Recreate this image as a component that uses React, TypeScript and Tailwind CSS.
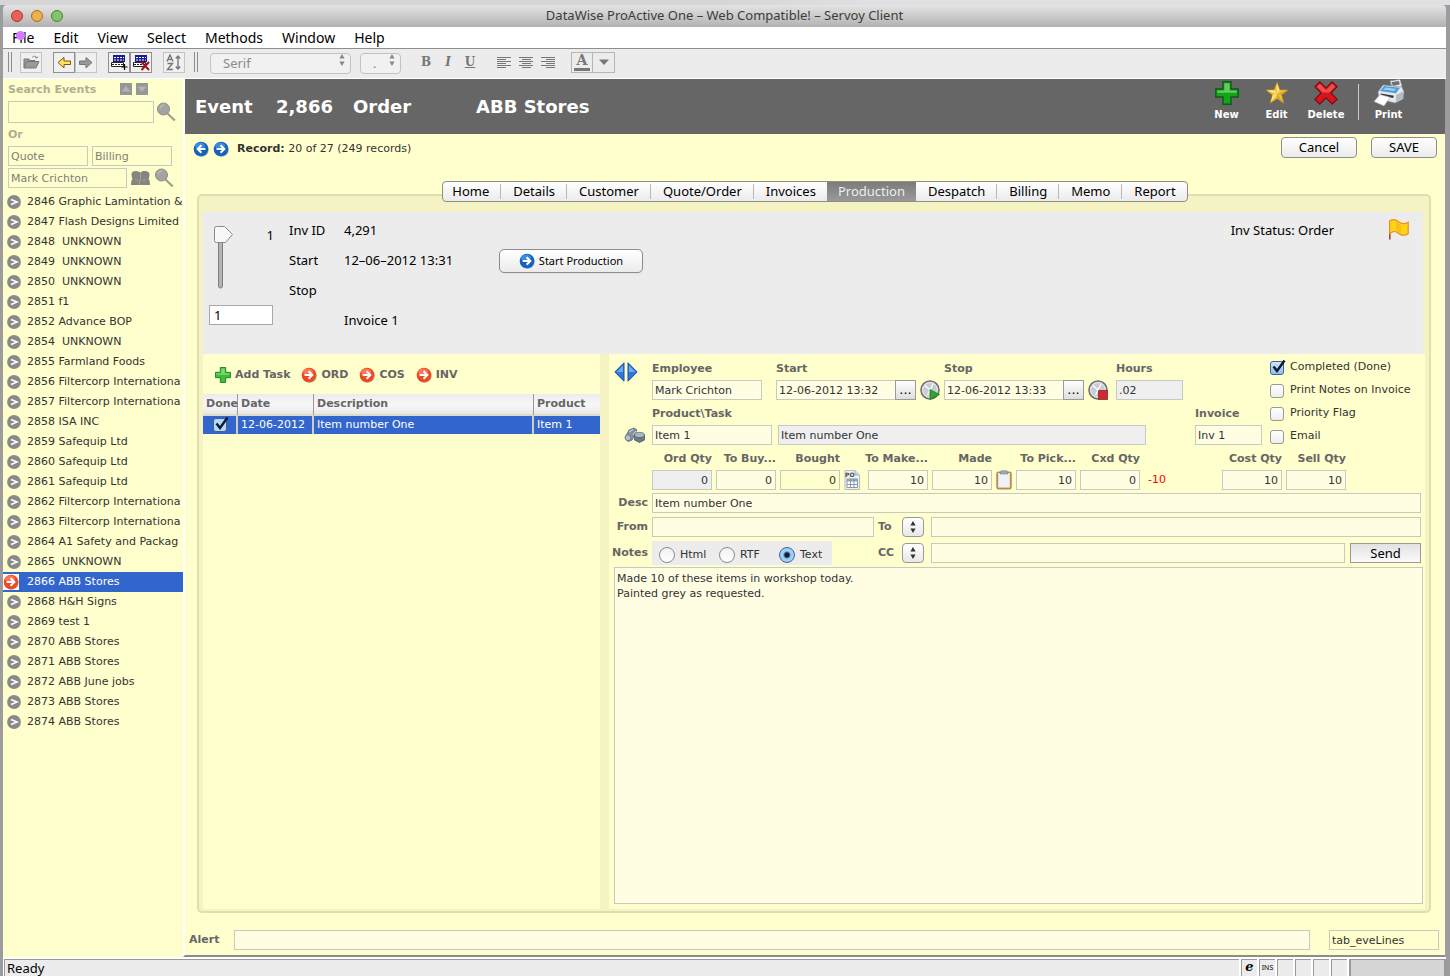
import { useState, type ReactNode } from "react";
import clsx from "clsx";

const UI = "font-['Noto_Sans','Lucida_Grande',sans-serif]";
const VERDANA = "font-['DejaVu_Sans',Verdana,sans-serif]";

const MENU = ["File", "Edit", "View", "Select", "Methods", "Window", "Help"];

const TABS = [
  "Home",
  "Details",
  "Customer",
  "Quote/Order",
  "Invoices",
  "Production",
  "Despatch",
  "Billing",
  "Memo",
  "Report",
];

const EVENTS = [
  { id: 2846, name: "Graphic Lamintation &" },
  { id: 2847, name: "Flash Designs Limited" },
  { id: 2848, name: " UNKNOWN" },
  { id: 2849, name: " UNKNOWN" },
  { id: 2850, name: " UNKNOWN" },
  { id: 2851, name: "f1" },
  { id: 2852, name: "Advance BOP" },
  { id: 2854, name: " UNKNOWN" },
  { id: 2855, name: "Farmland Foods" },
  { id: 2856, name: "Filtercorp Internationa" },
  { id: 2857, name: "Filtercorp Internationa" },
  { id: 2858, name: "ISA INC" },
  { id: 2859, name: "Safequip Ltd" },
  { id: 2860, name: "Safequip Ltd" },
  { id: 2861, name: "Safequip Ltd" },
  { id: 2862, name: "Filtercorp Internationa" },
  { id: 2863, name: "Filtercorp Internationa" },
  { id: 2864, name: "A1 Safety and Packag" },
  { id: 2865, name: " UNKNOWN" },
  { id: 2866, name: "ABB Stores" },
  { id: 2868, name: "H&H Signs" },
  { id: 2869, name: "test 1" },
  { id: 2870, name: "ABB Stores" },
  { id: 2871, name: "ABB Stores" },
  { id: 2872, name: "ABB June jobs" },
  { id: 2873, name: "ABB Stores" },
  { id: 2874, name: "ABB Stores" },
];

/* ---------- icons ---------- */

function ArrowBall({ tone, flip }: { tone: "blue" | "red"; flip?: boolean }) {
  const fill = tone === "blue" ? "#1263c0" : "#ee4a22";
  const shine = tone === "blue" ? "#5aa9ee" : "#ff9a78";
  return (
    <svg width="16" height="16" viewBox="0 0 16 16" className="shrink-0" aria-hidden>
      <circle cx="8.5" cy="8.7" r="7.3" fill="#00000040" />
      <circle cx="8" cy="8" r="7.3" fill={fill} />
      <ellipse cx="7" cy="4.8" rx="5" ry="3.4" fill={shine} opacity="0.6" />
      <g transform={flip ? "matrix(-1 0 0 1 16 0)" : undefined} stroke="#fff" strokeWidth="2" fill="none">
        <path d="M3.6 8h7.6M7.6 4.2 11.4 8l-3.800 3.800" />
      </g>
    </svg>
  );
}

function GreyBall() {
  return (
    <svg width="14" height="14" viewBox="0 0 14 14" className="shrink-0" aria-hidden>
      <circle cx="7" cy="7" r="6.9" fill="#8a8a8a" />
      <path d="M4 4.4 10 7 4 9.6" stroke="#fff" strokeWidth="1.6" fill="none" />
    </svg>
  );
}

function Magnifier() {
  return (
    <svg width="20" height="20" viewBox="0 0 20 20" className="shrink-0" aria-hidden>
      <path d="m11.5 11.5 7.3 7" stroke="#a09f8c" strokeWidth="2.2" />
      <circle cx="7.5" cy="7" r="6" fill="#a3a3a3" stroke="#8d8d84" />
      <path d="M4 6.5A3.8 3.8 0 0 1 8 3.3" stroke="#b9b9b9" strokeWidth="1.4" fill="none" />
    </svg>
  );
}

function PlusIcon({ size, dark }: { size: number; dark?: boolean }) {
  return (
    <svg width={size} height={size} viewBox="0 0 24 24" aria-hidden>
      <path
        d="M8 .8h8V8h7.2v8H16v7.2H8V16H.8V8H8z"
        fill={dark ? "#12a51b" : "#3cc03a"}
        stroke={dark ? "#0b5c12" : "#1d7d22"}
        strokeWidth="1.4"
      />
      <path d="M9.300 2.200h5.400v7.200h7v2.400H2.300V9.400h7z" fill="#b9f0a8" opacity="0.5" />
    </svg>
  );
}

function StarIcon() {
  return (
    <svg width="24" height="24" viewBox="0 0 24 24" aria-hidden>
      <path
        d="m12 .8 2.900 7.900 8.400.3-6.600 5.100 2.300 8.300-7-4.700-7 4.700 2.300-8.300L.7 9l8.400-.3z"
        fill="#f0c33c"
        stroke="#a77c1c"
        strokeWidth="0.6"
      />
      <path d="m12 2 2.400 7.200L12 13zM1.800 9.300 9.400 9.200 12 13zM5.600 21.300l2.100-7L12 13z" fill="#fff0a8" opacity="0.75" />
      <path d="m22.300 9.400-5.900 4.600L12 13zM18.300 21.400 12 17.200V13z" fill="#c98d1e" opacity="0.6" />
    </svg>
  );
}

function CrossIcon() {
  return (
    <svg width="24" height="24" viewBox="0 0 24 24" aria-hidden>
      <path
        d="M5.800.9 12 7 18.200.9l4.900 4.900L16.900 12l6.200 6.200-4.900 4.900L12 16.900l-6.200 6.200-4.900-4.900L7.100 12 .9 5.800z"
        fill="#d5151b"
        stroke="#7c0b10"
        strokeWidth="1.2"
      />
      <path d="M5.800 2.700 12 9l6.200-6.300 3 3.100-5.700 5.700H8.500L2.800 5.800z" fill="#ff9a90" opacity="0.45" />
    </svg>
  );
}

function PrinterIcon() {
  return (
    <svg width="32" height="28" viewBox="0 0 32 28" aria-hidden>
      <path d="m17 2 10-1.500 2 7-9 3z" fill="#f4f4f4" stroke="#999" strokeWidth="0.6" />
      <path d="m18.500 3 7.500-1 .8 3.500-7 1.500z" fill="#6d7074" />
      <path d="M5 13 10 6l19 2 2 5-1 7-8 4-16-4z" fill="#e4e9ee" stroke="#8b949c" strokeWidth="0.7" />
      <path d="m7 12 4-5 16 1.800-4 5.500z" fill="#4f9cd8" />
      <path d="m10 10.500 3-2 10 1.500-2 2z" fill="#9dd0f2" />
      <path d="m23 16 7-3.500v6.500l-7 4z" fill="#b4bbc2" />
      <path d="m8 14.500 13 2.300-1 2.200-13-3z" fill="#33383d" />
      <path d="m7 15.500 10 2.800-6 8.700L1 22.500z" fill="#fff" stroke="#a0a8b0" strokeWidth="0.6" />
    </svg>
  );
}

function FlagIcon() {
  return (
    <svg width="21" height="21" viewBox="0 0 21 21" aria-hidden>
      <path d="M1.800 2v18.500" stroke="#9a4a2c" strokeWidth="1.6" />
      <path
        d="M1.600 2C5-.2 8 .6 10.500 2.600S16.500 5.600 20.200 3.200v11.500c-3.500 2.300-6.500 2-9.500-.3S5.500 11.500 1.600 14.500z"
        fill="#fdd31c"
        stroke="#ef8b1c"
        strokeWidth="1.2"
      />
      <path d="M8 2.500c3 1 3 2.500 5 3.500v9c-2-1-3-2.500-5-3z" fill="#fbb012" opacity="0.6" />
    </svg>
  );
}

function ClockIcon({ mode }: { mode: "play" | "stop" }) {
  return (
    <svg width="20" height="20" viewBox="0 0 20 20" className="shrink-0" aria-hidden>
      <circle cx="10" cy="10" r="9" fill="#dfe4e8" stroke="#707070" strokeWidth="1.6" />
      <circle cx="10" cy="10" r="6.8" fill="#c5ccd3" />
      <path d="M10 10 5 5.500M10 10l3-6M10 10l-2.500 5" stroke="#fff" strokeWidth="1.3" />
      {mode === "play" ? (
        <path d="m10 9.500 9.500 5L10 19.500z" fill="#2fa52f" stroke="#1c6e1f" strokeWidth="0.7" />
      ) : (
        <path d="M10.500 10.500h9v9h-9z" fill="#cf2b30" stroke="#8a1418" strokeWidth="0.7" />
      )}
    </svg>
  );
}

function BinocularsIcon() {
  return (
    <svg width="21" height="16" viewBox="0 0 21 16" aria-hidden>
      <path d="M1 10.500 5 3l5-2 3 2-5 10-4 1.500z" fill="#8593a0" stroke="#55616c" strokeWidth="0.8" />
      <ellipse cx="4" cy="10.800" rx="2.800" ry="3" fill="#b4c0ca" stroke="#5d6974" strokeWidth="0.7" />
      <path d="M10.500 8v5l5 2.500 5-2.500V8z" fill="#6d7b88" stroke="#4c5863" strokeWidth="0.8" />
      <ellipse cx="15.500" cy="8" rx="5" ry="2.600" fill="#a9b7c3" stroke="#4e5a65" strokeWidth="0.7" />
      <path d="m5 5 4-2.500M9 8l3-4" stroke="#d5dde4" />
    </svg>
  );
}

function PurchaseOrderIcon() {
  return (
    <svg width="16" height="20" viewBox="0 0 16 20" aria-hidden>
      <path d="M1 .5h10l4.500 4.500v14.500H1z" fill="#eef1f4" stroke="#b5bcc4" />
      <path d="M11 .5V5h4.500" fill="#cfd6dd" stroke="#a7b0b9" />
      <text x="1" y="7" fontSize="6" fontWeight="700" fontFamily="DejaVu Sans" fill="#444">
        PO
      </text>
      <path d="M3 9h10.500v8.500H3z" fill="#fff" stroke="#8799ab" />
      <path d="M3 9h10.500v2.500H3z" fill="#8fa3b6" />
      <path d="M3 14.500h10.500M6.500 9v8.500M10 9v8.500" stroke="#8799ab" />
    </svg>
  );
}

function ClipboardIcon() {
  return (
    <svg width="16" height="20" viewBox="0 0 16 20" aria-hidden>
      <rect x="0.8" y="2" width="14.400" height="17" rx="1.5" fill="#c99a5c" stroke="#9b7442" strokeWidth="0.8" />
      <path d="M2.200 3h11.600v14.500H2.200z" fill="#eff2f6" />
      <path d="M5 .8h6l1 3.200H4z" fill="#a4a9ae" stroke="#7d8287" strokeWidth="0.6" />
    </svg>
  );
}

function RecordTriangles() {
  return (
    <svg width="24" height="20" viewBox="0 0 24 20" aria-hidden>
      <path d="M10 .8v18.400L.8 10z" fill="#2f78d8" stroke="#1d4f9f" />
      <path d="M14 .8v18.400L23.200 10z" fill="#2f78d8" stroke="#1d4f9f" />
      <path d="M9 3.500V10H2.800zM15 3.500V10h6.200z" fill="#8fc0f7" opacity="0.7" />
    </svg>
  );
}

function UpDown({ className }: { className?: string }) {
  return (
    <svg width="6" height="12" viewBox="0 0 6 12" className={className} fill="currentColor" aria-hidden>
      <path d="M3 0 5.600 4.400H.4zM3 12 .4 7.600h5.200z" />
    </svg>
  );
}

function PeopleIcon() {
  return (
    <svg width="19" height="16" viewBox="0 0 19 16" aria-hidden>
      <path
        d="M.5 4c0-2 2-3 4.500-3s4 1 4.500 2C10.500 1 12 1 14 1s4.500 1 4.500 3.500-.5 3.500-1 4.500c1 1 1.500 2.500 1.500 6H0c0-3 .5-5 1.500-6C1 8 .5 6 .5 4z"
        fill="#858580"
      />
      <path d="M9.500 4v5l-1.500 6M4 9l3 2M15 9l-3 2" stroke="#a5a59c" fill="none" />
    </svg>
  );
}

function Tick() {
  return (
    <svg width="16" height="16" viewBox="0 0 16 16" className="pointer-events-none absolute -top-0.5 left-0" aria-hidden>
      <path d="M3.500 7.500 7 12 14.500 1.500" stroke="#0b1a30" strokeWidth="2.4" fill="none" />
    </svg>
  );
}

/* ---------- toolbar ---------- */

function ToolButton({ label, dim, children }: { label: string; dim?: boolean; children: ReactNode }) {
  return (
    <button
      type="button"
      aria-label={label}
      className={clsx(
        "flex h-[21px] w-[22px] items-center justify-center border bg-[#f0f0f0]",
        dim ? "border-[#c4c4c4]" : "border-[#8f8f8f]",
      )}
    >
      <svg width="18" height="17" viewBox="0 0 18 17" aria-hidden>
        {children}
      </svg>
    </button>
  );
}

function Grip() {
  return <span className="h-5 w-1 border-x border-[#8c8c8c]" />;
}

function TableGlyph({ children }: { children: ReactNode }) {
  return (
    <>
      <path d="M3 1h12v7H3z" fill="#1b1b8c" />
      <path d="M4 3.500h10M4 6h10" stroke="#fff" strokeDasharray="2 1" />
      <path d="M1.500 8.500h12v4h-12z" fill="#fff" stroke="#222" />
      <path d="M2 10.500h11" stroke="#222" strokeDasharray="2 1" />
      {children}
    </>
  );
}

function AlignGlyph({ lines }: { lines: string }) {
  return (
    <svg width="15" height="13" viewBox="0 0 15 13" aria-hidden>
      <path d={lines} stroke="#777" />
    </svg>
  );
}

function Toolbar() {
  const select =
    "h-[21px] appearance-none rounded border border-[#c2c2c2] bg-[#f1f1f1] pl-3 text-[13px] leading-[17px] text-[#8a8a8a]";
  return (
    <div className="flex h-[30px] items-center border-b border-white bg-[#ececec] pb-[3px] pl-[5px] text-[#888]">
      <Grip />
      <div className="ml-2 flex">
        <ToolButton label="Open" dim>
          <path d="M2 14V5h5l1 1.500h5V8" fill="#999" stroke="#777" />
          <path d="m2 14 3-6.500h12L14 14z" fill="#999" stroke="#777" />
          <path d="M10 3.500c2-2 4-1.500 5 .5l1-1.500M15 4l-2-.5" stroke="#888" fill="none" />
        </ToolButton>
      </div>
      <div className="ml-[11px] flex">
        <ToolButton label="Back">
          <path d="m3 8.500 6-5V7h6.500v3.500H9V14z" fill="#ffe15a" stroke="#7a5a10" />
        </ToolButton>
        <ToolButton label="Forward" dim>
          <path d="m15 8.500-6-5V7H2.500v3.500H9V14z" fill="#999" stroke="#777" />
        </ToolButton>
      </div>
      <div className="ml-[11px] flex">
        <ToolButton label="New record">
          <TableGlyph>
            <path d="M14.500 10v6M11.500 13h6" stroke="#000" strokeWidth="1.2" />
          </TableGlyph>
        </ToolButton>
        <ToolButton label="Delete record">
          <TableGlyph>
            <path d="m9.500 8 7.500 8M17 8l-7.500 8" stroke="#a3121f" strokeWidth="2" />
          </TableGlyph>
        </ToolButton>
      </div>
      <div className="ml-[11px] mr-[9px] flex">
        <ToolButton label="Sort" dim>
          <path d="M2 7.500 5 1l3 6.500M3 5.500h4M2.500 9.500h5L2.500 15.500h5.500" stroke="#777" strokeWidth="1.4" fill="none" />
          <path d="M13 2v13M10.800 4.500 13 2l2.200 2.500M10.800 12.500 13 15l2.200-2.500" stroke="#777" strokeWidth="1.4" fill="none" />
        </ToolButton>
      </div>
      <Grip />
      <div className="relative ml-3">
        <select aria-label="Font" className={clsx(select, "w-[141px]")}>
          <option>Serif</option>
        </select>
        <UpDown className="pointer-events-none absolute right-1.5 top-1" />
      </div>
      <div className="relative ml-[9px]">
        <select aria-label="Font size" className={clsx(select, "w-[41px]")}>
          <option>.</option>
        </select>
        <UpDown className="pointer-events-none absolute right-1.5 top-1" />
      </div>
      <div className="ml-3.5 flex font-['DejaVu_Serif',serif] text-[12px] font-bold text-[#777]">
        <button type="button" className="w-[22px]">B</button>
        <button type="button" className="w-[22px] italic">I</button>
        <button type="button" className="w-[22px] underline">U</button>
      </div>
      <div className="ml-4 flex gap-[7px]">
        <button type="button" aria-label="Align left">
          <AlignGlyph lines="M0 1.500h14M0 3.500h9M0 5.500h14M0 7.500h9M0 9.500h14M0 11.500h9" />
        </button>
        <button type="button" aria-label="Align center">
          <AlignGlyph lines="M0 1.500h14M3 3.500h9M0 5.500h14M3 7.500h9M0 9.500h14M3 11.500h9" />
        </button>
        <button type="button" aria-label="Align right">
          <AlignGlyph lines="M0 1.500h14M5 3.500h9M0 5.500h14M5 7.500h9M0 9.500h14M5 11.500h9" />
        </button>
      </div>
      <div className="ml-[15px] flex">
        <button
          type="button"
          className="flex h-[21px] w-[22px] flex-col items-center border border-[#b5b5b5] font-['DejaVu_Serif',serif] text-[14px] font-bold leading-[15px] text-[#777]"
        >
          A
          <span className="h-[3px] w-4 bg-[#777]" />
        </button>
        <button
          type="button"
          aria-label="Text colour"
          className="flex h-[21px] w-[22px] items-center justify-center border border-l-0 border-[#b5b5b5]"
        >
          <svg width="10" height="6" viewBox="0 0 10 6" aria-hidden>
            <path d="M0 .5h10L5 6z" fill="#777" />
          </svg>
        </button>
      </div>
    </div>
  );
}

/* ---------- form pieces ---------- */

const INPUT = "h-5 border border-[#c9c9c4] px-[2px] text-[11px] text-[#333] outline-none";

type FieldProps = {
  id: string;
  label: string;
  value: string;
  className: string;
  grey?: boolean;
  picker?: boolean;
};

function Field({ id, label, value, className, grey, picker }: FieldProps) {
  return (
    <div className={clsx("flex shrink-0 flex-col gap-1", className)}>
      <label htmlFor={id} className="h-[15px] text-[11px] font-bold leading-[15px] text-[#666]">
        {label}
      </label>
      <div className="flex">
        <input
          id={id}
          defaultValue={value}
          className={clsx(INPUT, "w-full min-w-0", grey ? "bg-[#efefef]" : "bg-[#fffee3]", picker && "border-r-0")}
        />
        {picker && (
          <button
            type="button"
            aria-label={`Pick ${label}`}
            className="h-5 w-[21px] shrink-0 border border-[#9a9a9a] bg-linear-to-b from-white to-[#dedede] text-[13px] leading-[18px] text-black"
          >
            ...
          </button>
        )}
      </div>
    </div>
  );
}

function Qty({ id, label, value, bg = "bg-[#fffee3]" }: { id: string; label: string; value: string; bg?: string }) {
  return (
    <div className="flex w-[60px] shrink-0 flex-col items-end gap-1">
      <label htmlFor={id} className="h-[15px] whitespace-nowrap text-[11px] font-bold leading-[15px] text-[#666]">
        {label}
      </label>
      <input id={id} defaultValue={value} className={clsx(INPUT, "w-full pr-[3px] text-right", bg)} />
    </div>
  );
}

function Check({ id, label, checked }: { id: string; label: string; checked?: boolean }) {
  const [on, setOn] = useState(!!checked);
  return (
    <div className="flex h-[23px] items-center">
      <span className="relative h-[14px] w-[14px]">
        <input
          id={id}
          type="checkbox"
          checked={on}
          onChange={() => setOn(!on)}
          className="block h-[14px] w-[14px] appearance-none rounded-[3px] border border-[#9a9a90] bg-linear-to-b from-white to-[#eeeeee] checked:border-[#44608c] checked:from-[#cfe5fb] checked:to-[#8cc0f2]"
        />
        {on && <Tick />}
      </span>
      <label htmlFor={id} className="ml-1.5 whitespace-nowrap text-[11px] text-[#333]">
        {label}
      </label>
    </div>
  );
}

function RowLabel({ htmlFor, children }: { htmlFor: string; children: ReactNode }) {
  return (
    <label htmlFor={htmlFor} className="w-[43px] shrink-0 pr-1 text-right text-[11px] font-bold text-[#666]">
      {children}
    </label>
  );
}

function Stepper({ label }: { label: string }) {
  return (
    <button
      type="button"
      aria-label={label}
      className="flex h-5 w-[22px] shrink-0 items-center justify-center rounded border border-[#999] bg-linear-to-b from-white to-[#e8e8e8] text-[#333]"
    >
      <UpDown />
    </button>
  );
}

/* ---------- sidebar ---------- */

function Sidebar() {
  const [selected, setSelected] = useState(2866);
  const box = "h-5 border border-[#c9c9c4] bg-transparent px-0.5 text-[11px] text-[#80807a] outline-none";

  return (
    <aside className="w-[180px] shrink-0 overflow-hidden bg-[#fffecd]">
      <div className="flex h-[113px] flex-col pl-[5px]">
        <div className="flex h-[22px] items-center">
          <label htmlFor="search" className="w-28 pt-px text-[11px] font-bold text-[#b0af92]">
            Search Events
          </label>
          <div className="mb-0.5 flex gap-1">
            {["M6 3 10.500 8.500h-9z", "M6 9 1.500 3.500h9z"].map((d, i) => (
              <button key={d} type="button" aria-label={i ? "Next" : "Previous"} className="bg-[#979797]">
                <svg width="12" height="12" viewBox="0 0 12 12" aria-hidden>
                  <path d={d} fill="#b4b4b0" />
                </svg>
              </button>
            ))}
          </div>
        </div>
        <div className="flex items-center gap-0.5">
          <input id="search" className={clsx(box, "h-[22px] w-[146px]")} />
          <Magnifier />
        </div>
        <span className="flex h-[23px] items-center pt-0.5 text-[11px] font-bold text-[#b0af92]">Or</span>
        <div className="flex gap-1">
          <input aria-label="Type" defaultValue="Quote" className={clsx(box, "w-20")} />
          <input aria-label="Stage" defaultValue="Billing" className={clsx(box, "w-20")} />
        </div>
        <div className="mt-0.5 flex items-center gap-1">
          <input aria-label="Employee filter" defaultValue="Mark Crichton" className={clsx(box, "w-[119px]")} />
          <PeopleIcon />
          <Magnifier />
        </div>
      </div>
      <ul>
        {EVENTS.map((event) => {
          const active = event.id === selected;
          return (
            <li key={event.id}>
              <button
                type="button"
                onClick={() => setSelected(event.id)}
                className={clsx(
                  "flex h-5 w-full items-center text-left text-[11px]",
                  active ? "bg-[#3366cc] text-white" : "text-[#333]",
                )}
              >
                <span className="flex w-6 shrink-0 pl-1">
                  {active ? (
                    <span className="-ml-1 bg-white">
                      <ArrowBall tone="red" />
                    </span>
                  ) : (
                    <GreyBall />
                  )}
                </span>
                <span className="whitespace-pre">{`${event.id} ${event.name}`}</span>
              </button>
            </li>
          );
        })}
      </ul>
    </aside>
  );
}

/* ---------- production tab ---------- */

function InvoiceSummary() {
  return (
    <div className={clsx("mr-0.5 flex h-[142px] items-start bg-[#ececec] pl-1.5 pt-[3px] text-[13px] text-black", UI)}>
      <div className="flex w-20 flex-col">
        <div className="flex h-[90px] pt-[11px]">
          <div className="relative ml-[5px] w-5">
            <svg width="20" height="64" viewBox="0 0 20 64" aria-hidden>
              <rect x="4.500" y="10" width="4" height="52" rx="2" fill="#b4b4b4" stroke="#7d7d7d" />
              <path d="M2.500.5h8L18.500 8.500l-7 8h-9q-2 0-2-2v-12q0-2 2-2z" fill="#f8f8f8" stroke="#8a8a8a" />
            </svg>
            <input
              type="range"
              aria-label="Invoice slider"
              min={1}
              max={10}
              defaultValue={1}
              className="absolute inset-0 h-16 w-5 opacity-0 [writing-mode:vertical-lr]"
            />
          </div>
          <span className="ml-auto mr-[15px]">1</span>
        </div>
        <input
          aria-label="Invoice number"
          defaultValue="1"
          className="h-5 w-16 border border-[#a9a9a9] bg-white px-1 outline-none"
        />
      </div>
      <dl className="grid auto-rows-[30px] grid-cols-[55px_155px] items-center pt-px">
        <dt>Inv ID</dt>
        <dd>4,291</dd>
        <dt>Start</dt>
        <dd>12–06–2012 13:31</dd>
        <dt>Stop</dt>
        <dd />
        <dt />
        <dd>Invoice 1</dd>
      </dl>
      <button
        type="button"
        className="mt-[34px] flex h-6 w-36 items-center justify-center gap-1 rounded-[5px] border border-[#8c8c8c] bg-linear-to-b from-white to-[#ebebeb] text-[11px] shadow-xs"
      >
        <ArrowBall tone="blue" />
        Start Production
      </button>
      <span className="ml-auto mr-[54px] leading-[30px]">Inv Status: Order</span>
      <button type="button" aria-label="Flag" className="mr-3.5 mt-1">
        <FlagIcon />
      </button>
    </div>
  );
}

function TaskList() {
  const th = "border-r border-b-2 border-r-[#999] border-b-[#dcdcc8] px-[3px] text-left font-bold last:border-r-0";
  const td = "border-r-2 border-[#cfcfc0] px-[3px] last:border-r-0";

  return (
    <div className="w-[397px] shrink-0 bg-[#fffecd] text-[11px]">
      <div className="flex h-10 items-center gap-[11px] pl-3 pt-0.5 font-bold text-[#666]">
        <button type="button" className="flex items-center gap-1">
          <PlusIcon size={16} />
          Add Task
        </button>
        {["ORD", "COS", "INV"].map((name) => (
          <button key={name} type="button" className="flex items-center gap-1">
            <ArrowBall tone="red" />
            {name}
          </button>
        ))}
      </div>
      <table className="w-full table-fixed border-separate border-spacing-0">
        <colgroup>
          <col className="w-[35px]" />
          <col className="w-[76px]" />
          <col className="w-[220px]" />
          <col />
        </colgroup>
        <thead>
          <tr className="h-[22px] bg-linear-to-b from-[#ececec] via-[#f8f8f8] to-[#e4e4e4] text-[#666]">
            <th className={clsx(th, "pr-0")}>Done</th>
            <th className={th}>Date</th>
            <th className={th}>Description</th>
            <th className={th}>Product</th>
          </tr>
        </thead>
        <tbody>
          <tr className="h-[18px] bg-[#3366cc] text-white">
            <td className={td}>
              <span className="relative mx-auto block h-[14px] w-[14px]">
                <input
                  type="checkbox"
                  aria-label="Done"
                  defaultChecked
                  className="block h-[14px] w-[14px] appearance-none rounded-[3px] border border-[#44608c] bg-[#b5d8f8]"
                />
                <Tick />
              </span>
            </td>
            <td className={clsx(td, "whitespace-nowrap")}>12-06-2012</td>
            <td className={td}>Item number One</td>
            <td className={td}>Item 1</td>
          </tr>
        </tbody>
      </table>
    </div>
  );
}

function TaskForm() {
  const [format, setFormat] = useState("Text");

  return (
    <div className="flex min-w-0 flex-1 flex-col bg-[#fffecd] pb-[5px] pr-1 pt-[3px] text-[11px]">
      <div className="flex">
        <div className="flex w-[653px] shrink-0 flex-col gap-1.5 pt-1">
          <div className="flex items-end gap-1">
            <button type="button" aria-label="Previous or next task" className="w-[39px] self-start pl-[5px] pt-px">
              <RecordTriangles />
            </button>
            <Field id="employee" label="Employee" value="Mark Crichton" className="mr-2.5 w-[110px]" />
            <Field id="start" label="Start" value="12-06-2012 13:32" className="w-[140px]" picker />
            <button type="button" aria-label="Start clock">
              <ClockIcon mode="play" />
            </button>
            <Field id="stop" label="Stop" value="12-06-2012 13:33" className="w-[140px]" picker />
            <button type="button" aria-label="Stop clock">
              <ClockIcon mode="stop" />
            </button>
            <Field id="hours" label="Hours" value=".02" className="ml-1 w-[67px]" grey />
          </div>
          <div className="flex items-end">
            <button type="button" aria-label="Find product" className="w-[43px] shrink-0 pb-0.5 pl-[15px]">
              <BinocularsIcon />
            </button>
            <Field id="product" label={"Product\\Task"} value="Item 1" className="mr-1.5 w-[120px]" />
            <input
              aria-label="Product description"
              defaultValue="Item number One"
              className={clsx(INPUT, "min-w-0 flex-1 bg-[#efefef]")}
            />
            <Field id="invoice" label="Invoice" value="Inv 1" className="ml-[49px] w-[67px]" />
          </div>
        </div>
        <div className="-mt-px ml-2">
          <Check id="completed" label="Completed (Done)" checked />
          <Check id="print-notes" label="Print Notes on Invoice" />
          <Check id="priority" label="Priority Flag" />
          <Check id="email" label="Email" />
        </div>
      </div>

      <div className="mt-[3px] flex items-end gap-1 pl-[43px]">
        <Qty id="ord" label="Ord Qty" value="0" bg="bg-[#efefef]" />
        <Qty id="buy" label="To Buy..." value="0" />
        <Qty id="bought" label="Bought" value="0" bg="bg-[#fffecd]" />
        <button type="button" aria-label="Purchase order" className="w-5">
          <PurchaseOrderIcon />
        </button>
        <Qty id="make" label="To Make..." value="10" />
        <Qty id="made" label="Made" value="10" />
        <button type="button" aria-label="Clipboard" className="w-4">
          <ClipboardIcon />
        </button>
        <Qty id="pick" label="To Pick..." value="10" />
        <Qty id="cxd" label="Cxd Qty" value="0" />
        <span className="w-[74px] pl-1 leading-5 text-[#f00]">-10</span>
        <Qty id="cost" label="Cost Qty" value="10" />
        <Qty id="sell" label="Sell Qty" value="10" />
      </div>

      <div className="mt-[3px] flex flex-col gap-1">
        <div className="flex items-center">
          <RowLabel htmlFor="desc">Desc</RowLabel>
          <input id="desc" defaultValue="Item number One" className={clsx(INPUT, "min-w-0 flex-1 bg-[#fffee3]")} />
        </div>
        <div className="flex items-center">
          <RowLabel htmlFor="from">From</RowLabel>
          <input id="from" className={clsx(INPUT, "w-[222px] bg-[#fffee3]")} />
          <label htmlFor="to" className="ml-1 w-6 font-bold text-[#666]">
            To
          </label>
          <Stepper label="Choose To" />
          <input id="to" className={clsx(INPUT, "ml-[7px] min-w-0 flex-1 bg-[#fffee3]")} />
        </div>
        <div className="flex items-center">
          <RowLabel htmlFor="notes">Notes</RowLabel>
          <div className="flex h-6 w-[180px] items-center bg-[#ececec] pl-[7px] pt-1">
            {["Html", "RTF", "Text"].map((name) => (
              <label key={name} className="flex w-[60px] shrink-0 items-center gap-[5px] text-[#333] last:w-[53px]">
                <input
                  type="radio"
                  name="format"
                  checked={format === name}
                  onChange={() => setFormat(name)}
                  className="h-4 w-4 appearance-none rounded-full border border-[#8a8a8a] bg-linear-to-b from-[#f2f2f2] to-white checked:border-[#44608c] checked:bg-[radial-gradient(circle,#10203c_0_2px,#9fd0fa_4px)]"
                />
                {name}
              </label>
            ))}
          </div>
          <label htmlFor="cc" className="ml-[46px] w-6 font-bold text-[#666]">
            CC
          </label>
          <Stepper label="Choose CC" />
          <input id="cc" className={clsx(INPUT, "ml-[7px] min-w-0 flex-1 bg-[#fffee3]")} />
          <button
            type="button"
            className={clsx(
              "ml-[5px] h-5 w-[71px] border border-[#999] bg-linear-to-b from-[#e2e2e2] to-[#fafafa] text-[13px] leading-[18px] text-black",
              UI,
            )}
          >
            Send
          </button>
        </div>
      </div>

      <textarea
        id="notes"
        defaultValue={"Made 10 of these items in workshop today.\nPainted grey as requested."}
        className="-mr-0.5 ml-[5px] mt-0.5 min-h-[200px] flex-1 resize-none border border-[#c9c9c4] bg-[#fffee3] px-0.5 py-[3px] leading-[15px] text-[#333] outline-none"
      />
    </div>
  );
}

/* ---------- main area ---------- */

function EventHeader() {
  const action = "flex flex-col items-center gap-[3px] text-[10px] font-bold leading-[14px]";
  return (
    <header className="flex h-[55px] items-center bg-[#666] pl-2.5 text-white">
      <h1 className="flex text-[18px] font-bold">
        <span className="w-[81px]">Event</span>
        <span className="w-[77px]">2,866</span>
        <span className="w-[123px]">Order</span>
        <span>ABB Stores</span>
      </h1>
      <div className="mb-2.5 ml-auto mr-[34px] flex items-end">
        <button type="button" className={clsx(action, "w-[51px]")}>
          <PlusIcon size={24} dark />
          New
        </button>
        <button type="button" className={clsx(action, "w-[49px]")}>
          <StarIcon />
          Edit
        </button>
        <button type="button" className={clsx(action, "w-[50px]")}>
          <CrossIcon />
          Delete
        </button>
        <span className="mx-[7px] h-9 w-px self-center bg-[#ccc]" />
        <button type="button" className={clsx(action, "w-[45px]")}>
          <span className="-my-0.5">
            <PrinterIcon />
          </span>
          Print
        </button>
      </div>
    </header>
  );
}

function Tabs() {
  const [active, setActive] = useState("Production");
  return (
    <nav
      className={clsx(
        "relative z-10 mx-auto -mb-2 flex h-[21px] overflow-hidden rounded border border-[#8f8f80] bg-linear-to-b from-white to-[#ebebeb] text-[13px]",
        UI,
      )}
    >
      {TABS.map((tab, i) => (
        <button
          key={tab}
          type="button"
          onClick={() => setActive(tab)}
          className={clsx(
            "flex items-center leading-[19px]",
            tab === active ? "bg-linear-to-b from-[#7c7c7c] to-[#999] px-[11px] text-[#eee]" : "text-black",
          )}
        >
          {tab === active ? (
            tab
          ) : (
            <span
              className={clsx(
                "h-[15px] border-[#b9b9b9] pr-[11px] leading-[15px]",
                i === 0 ? "pl-[9px]" : "pl-3",
                i > 0 && TABS[i - 1] !== active && "border-l",
              )}
            >
              {tab}
            </span>
          )}
        </button>
      ))}
    </nav>
  );
}

function MainArea() {
  const push =
    "h-[21px] rounded border border-[#8f8f8f] bg-linear-to-b from-white to-[#ebebeb] text-[13px] leading-[19px] text-black";
  return (
    <main className="flex min-w-0 flex-1 flex-col border-b-2 border-l-2 border-b-[#8c8c8c] border-l-white bg-[#fffecd]">
      <EventHeader />
      <div className="flex h-[47px] items-start pl-2 pr-2 pt-[3px] text-[11px] text-[#333]">
        <div className="flex h-[23px] items-center gap-1">
          <button type="button" aria-label="Previous record">
            <ArrowBall tone="blue" flip />
          </button>
          <button type="button" aria-label="Next record">
            <ArrowBall tone="blue" />
          </button>
          <span className="ml-1 pt-0.5">
            <b>Record:</b> 20 of 27 (249 records)
          </span>
        </div>
        <button type="button" className={clsx(push, UI, "ml-auto w-[76px]")}>
          Cancel
        </button>
        <button type="button" className={clsx(push, UI, "ml-3.5 w-[66px]")}>
          SAVE
        </button>
      </div>
      <Tabs />
      <section className="ml-3 mr-3.5 flex flex-1 flex-col rounded-[5px] border-2 border-[#dfddb2] bg-[#f5f3c4] px-1 pb-0.5 pt-4">
        <InvoiceSummary />
        <div className="flex flex-1 gap-[9px]">
          <TaskList />
          <TaskForm />
        </div>
      </section>
      <div className="mb-[5px] mt-[17px] flex h-5 items-center pl-1 pr-1.5 text-[11px]">
        <label htmlFor="alert" className="w-[45px] font-bold text-[#666]">
          Alert
        </label>
        <input id="alert" className={clsx(INPUT, "min-w-0 flex-1 bg-[#fffee3]")} />
        <input
          aria-label="Form name"
          defaultValue="tab_eveLines"
          className={clsx(INPUT, "ml-[19px] w-[110px] bg-[#fffecd]")}
        />
      </div>
    </main>
  );
}

function TrafficLight({ className }: { className: string }) {
  return <span className={clsx("h-3 w-3 rounded-full border", className)} />;
}

function StatusBar() {
  const cell = "h-full w-4 border-l border-t border-[#999] bg-[#ececec]";
  return (
    <footer className={clsx("flex h-[19px] gap-0.5 bg-white pl-px pt-0.5 text-[13px] leading-4 text-black", UI)}>
      <span className="flex-1 border-l border-t border-[#999] bg-[#ececec] pl-0.5">Ready</span>
      <span className={clsx(cell, "text-center font-['DejaVu_Serif',serif] font-bold italic leading-[14px]")}>e</span>
      <span className={clsx(cell, "text-center text-[7px]")}>INS</span>
      <span className={cell} />
      <span className={cell} />
      <span className={cell} />
      <span className={cell} />
      <span className="h-full w-[97px] border-x-2 border-t border-[#999] bg-[#d6d6d6]" />
    </footer>
  );
}

export default function App() {
  return (
    <div className={clsx("flex min-h-screen flex-col bg-[#9c9c9f] pl-[3px] pr-1", VERDANA)}>
      <div className="-ml-[3px] -mr-1 h-[5px] bg-linear-to-r from-[#d6d6d6] from-50% to-[#e0e0e4] to-60%" />
      <div className="flex h-[22px] items-center rounded-t bg-linear-to-b from-[#e4e4e4] to-[#b2b2b2] pl-2">
        <div className="flex w-[52px] gap-2">
          <TrafficLight className="border-[#9b3a36] bg-[#ec5f5a]" />
          <TrafficLight className="border-[#a06d2a] bg-[#f2b049]" />
          <TrafficLight className="border-[#4c7f38] bg-[#7fc668]" />
        </div>
        <span className={clsx("flex-1 pr-[60px] text-center text-[13px] text-[#3c3c3c]", UI)}>
          DataWise ProActive One – Web Compatible! – Servoy Client
        </span>
      </div>
      <nav
        className={clsx(
          "relative flex h-[22px] items-center gap-[19px] border-b border-[#8f8f8f] bg-white pl-[9px] text-[14px] text-black",
          UI,
        )}
      >
        {MENU.map((item) => (
          <button key={item} type="button">
            {item}
          </button>
        ))}
        <span className="absolute left-[13px] top-1 h-[9px] w-[9px] rounded-full bg-[#d67cff]" />
      </nav>
      <div className={UI}>
        <Toolbar />
      </div>
      <div className="mr-px flex flex-1">
        <Sidebar />
        <MainArea />
      </div>
      <StatusBar />
    </div>
  );
}
